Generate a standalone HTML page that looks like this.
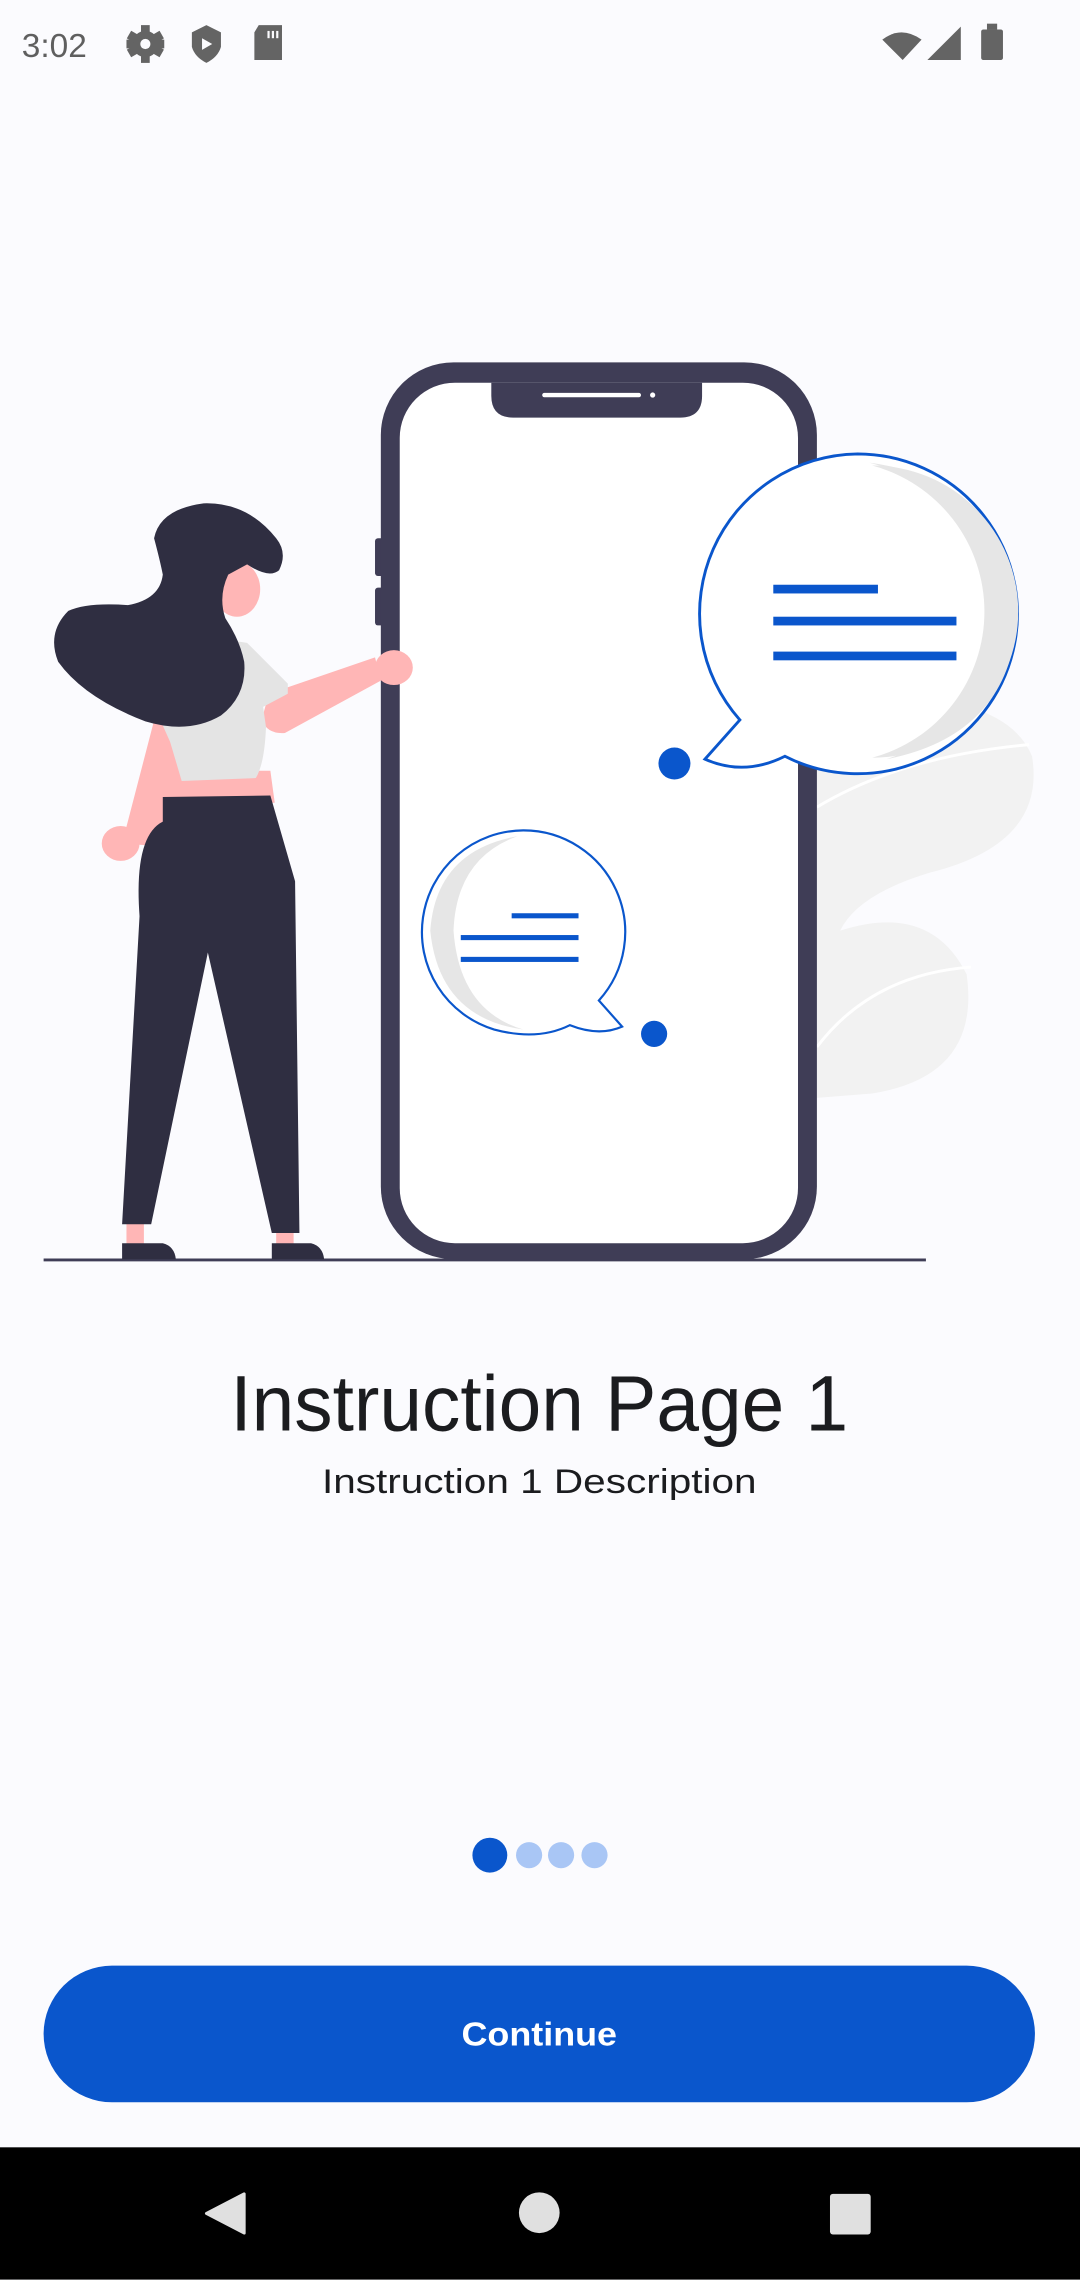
<!DOCTYPE html>
<html><head><meta charset="utf-8"><style>
html,body{margin:0;padding:0;background:#fbfbfe;}
svg{display:block;}
</style></head><body>
<svg width="1080" height="2280" viewBox="0 0 743 1568" xmlns="http://www.w3.org/2000/svg">
<rect width="743" height="1568" fill="#fbfbfe"/>
<!-- status bar -->
<text x="15" y="39" font-family="Liberation Sans, sans-serif" font-size="23" fill="#5f5f5f">3:02</text>
<g fill="#646464">
<circle cx="100" cy="30" r="9"/><circle cx="100" cy="30" r="3.5" fill="#fbfbfe"/>
<rect x="97" y="17" width="6" height="26"/><rect x="87" y="27" width="26" height="6"/>
<rect x="97" y="17" width="6" height="26" transform="rotate(60 100 30)"/><rect x="97" y="17" width="6" height="26" transform="rotate(-60 100 30)"/>
<circle cx="100" cy="30" r="3.5" fill="#fbfbfe"/>
<path d="M132 22 L142 17 L152 22 L152 32 Q150 39 142 43 Q134 39 132 32Z"/>
<path d="M139 26 L146 30 L139 34Z" fill="#fbfbfe"/>
<path d="M178 17 L194 17 L194 41 L175 41 L175 22Z"/>
<rect x="184" y="21" width="1.5" height="5" fill="#fbfbfe"/><rect x="187" y="21" width="1.5" height="5" fill="#fbfbfe"/><rect x="190" y="21" width="1.5" height="5" fill="#fbfbfe"/>
<path d="M607 27 Q620 17 634 27 L621 41Z"/>
<path d="M661 18 L661 41 L638 41Z"/>
<rect x="675" y="20" width="15" height="21" rx="1.5"/><rect x="679" y="16" width="7" height="4"/>
</g>
<!-- leaves -->
<path d="M562 480 Q690 470 710 520 Q720 580 640 600 Q590 615 578 640 Q640 620 665 670 Q675 740 600 752 L562 755Z" fill="#f2f2f2"/>
<path d="M562 555 Q620 520 708 512" stroke="#fff" stroke-width="2" fill="none"/>
<path d="M562 720 Q600 670 668 665" stroke="#fff" stroke-width="2" fill="none"/>
<!-- phone -->
<rect x="258" y="370" width="8" height="26" rx="2" fill="#3f3d56"/>
<rect x="258" y="404" width="8" height="26" rx="2" fill="#3f3d56"/>
<rect x="262" y="249" width="300" height="617" rx="50" fill="#3f3d56"/>
<rect x="275" y="263" width="274" height="592" rx="38" fill="#fff"/>
<path d="M338 263 L483 263 L483 272 Q483 287 468 287 L353 287 Q338 287 338 272Z" fill="#3f3d56"/>
<rect x="373" y="270" width="68" height="3" rx="1.5" fill="#fff"/><circle cx="449" cy="271.5" r="1.8" fill="#fff"/>
<!-- ground -->
<line x1="30" y1="866.5" x2="637" y2="866.5" stroke="#3f3d56" stroke-width="2"/>
<!-- big bubble -->
<path d="M590 312 A110 110 0 1 1 540 520 Q512 534 485 522 L509 495 A110 110 0 0 1 590 312Z" fill="#fff" stroke="#0a56cc" stroke-width="2"/>
<path d="M600 320 A100 100 0 0 1 600 521 A104 104 0 0 0 600 320Z" fill="#e6e6e6"/>
<path d="M598 318 Q690 330 700 422 Q696 505 610 522 Q682 498 684 422 Q682 340 598 318Z" fill="#e6e6e6"/>
<g fill="#0a56cc"><rect x="532" y="402" width="72" height="6"/><rect x="532" y="424" width="126" height="6"/><rect x="532" y="448" width="126" height="6"/></g>
<circle cx="464" cy="525" r="11" fill="#0a56cc"/>
<!-- small bubble -->
<path d="M360 571 A70 70 0 0 1 412 688 L428 706 Q412 713 392 705 Q370 716 340 708 A70 70 0 0 1 360 571Z" fill="#fff" stroke="#0a56cc" stroke-width="1.5"/>
<path d="M356 575 Q300 585 296 640 Q302 700 360 708 Q316 695 312 640 Q314 590 356 575Z" fill="#e6e6e6"/>
<g fill="#0a56cc"><rect x="352" y="628" width="46" height="3.5"/><rect x="317" y="643" width="81" height="3.5"/><rect x="317" y="658" width="81" height="3.5"/></g>
<circle cx="450" cy="711" r="9" fill="#0a56cc"/>
<!-- woman -->
<g>
<path d="M140 585 L112 582 L84 580 L110 480 L125 486Z" fill="#ffb6b6"/>
<ellipse cx="83" cy="580" rx="13" ry="12" fill="#ffb6b6"/>
<path d="M185 477 L258 452 L262 468 L196 504 Q184 505 180 495Z" fill="#ffb6b6"/>
<ellipse cx="271" cy="459" rx="13" ry="12" fill="#ffb6b6"/>
<path d="M118 530 L186 530 L189 552 L115 552Z" fill="#ffb6b6"/>
<rect x="87" y="840" width="12" height="17" fill="#ffb6b6"/><rect x="190" y="840" width="12" height="17" fill="#ffb6b6"/>
<path d="M130 450 Q150 438 170 442 L198 470 L198 477 L181 486 L183 500 Q182 525 176 535 L125 537 L117 510 L108 490Z" fill="#e4e4e4"/>
<ellipse cx="163" cy="405" rx="16" ry="19" fill="#ffb6b6"/>
<path d="M112 548 L186 547 L203 606 L206 848 L187 848 L143 655 L104 842 L84 842 L96 630 Q92 575 112 565Z" fill="#2f2e41"/>
<path d="M84 855 L112 855 Q120 857 121 866 L84 866Z" fill="#2f2e41"/>
<path d="M187 855 L214 855 Q222 857 223 866 L187 866Z" fill="#2f2e41"/>
<path d="M157 395 L170 388 Q185 398 192 392 Q198 380 190 370 Q170 345 140 346 Q110 350 106 370 Q110 385 112 395 Q110 412 88 416 Q60 414 47 420 Q32 435 40 455 Q58 480 100 496 Q130 505 152 492 Q170 478 168 455 Q165 440 155 425 Q150 410 157 395Z" fill="#2f2e41"/>
</g>
<!-- text -->
<text x="371" y="984" text-anchor="middle" font-family="Liberation Sans, sans-serif" font-size="54" fill="#1b1c1f" textLength="425" lengthAdjust="spacingAndGlyphs">Instruction Page 1</text>
<text x="371" y="1027" text-anchor="middle" font-family="Liberation Sans, sans-serif" font-size="23.5" fill="#1b1c1f" textLength="299" lengthAdjust="spacingAndGlyphs">Instruction 1 Description</text>
<!-- dots -->
<circle cx="337" cy="1276" r="12" fill="#0a56cc"/>
<circle cx="364" cy="1276" r="9" fill="#a9c6f5"/>
<circle cx="386" cy="1276" r="9" fill="#a9c6f5"/>
<circle cx="409" cy="1276" r="9" fill="#a9c6f5"/>
<!-- button -->
<rect x="30" y="1352" width="682" height="94" rx="47" fill="#0a56cc"/>
<text x="371" y="1407" text-anchor="middle" font-family="Liberation Sans, sans-serif" font-weight="bold" font-size="23" fill="#fff" textLength="107" lengthAdjust="spacingAndGlyphs">Continue</text>
<!-- nav bar -->
<rect x="0" y="1477" width="743" height="91" fill="#000"/>
<path d="M168 1509 L168 1536 L142 1522.5Z" fill="#e0e0e0" stroke="#e0e0e0" stroke-width="2" stroke-linejoin="round"/>
<circle cx="371" cy="1522" r="14" fill="#e0e0e0"/>
<rect x="571" y="1509" width="28" height="28" rx="2" fill="#e0e0e0"/>
</svg>
</body></html>
